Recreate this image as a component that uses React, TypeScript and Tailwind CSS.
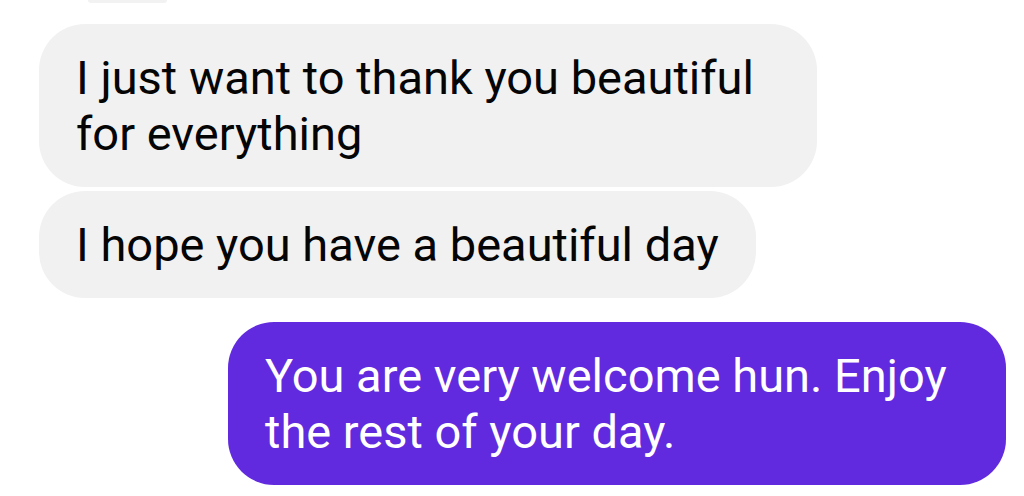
import React from "react";

/* ---------------- TYPES ---------------- */
interface Message {
  id: number;
  text: string;
  mine: boolean;
}

const MESSAGES: Message[] = [
  { id: 1, text: "I just want to thank you beautiful for everything", mine: false },
  { id: 2, text: "I hope you have a beautiful day", mine: false },
  { id: 3, text: "You are very welcome hun. Enjoy the rest of your day.", mine: true },
];

/* ---------------- COMPONENT ---------------- */
const App: React.FC = () => {
  return (
    <div
      className="w-[1024px] h-[496px] bg-white overflow-hidden flex flex-col"
      style={{ fontFamily: "Roboto, 'Noto Sans', sans-serif" }}
    >
      {/* tail of the previous bubble, cut off at the top */}
      <div className="ml-[88px] w-[79px] h-[3px] bg-[#f2f2f2] rounded-b-md" />

      <div className="flex flex-col mt-[21px]">
        {MESSAGES.map((m, i) => {
          const prevMine = i > 0 ? MESSAGES[i - 1].mine : m.mine;
          const gap = i === 0 ? "" : prevMine === m.mine ? "mt-[4px]" : "mt-[24px]";
          return (
            <div
              key={m.id}
              className={`max-w-[778px] px-[37px] pt-[26px] pb-[25px] rounded-[46px] text-[47px] leading-[56px] ${gap} ${
                m.mine
                  ? "self-end mr-[18px] bg-[#612ade] text-white"
                  : "self-start ml-[39px] bg-[#f1f1f1] text-[#050505]"
              }`}
            >
              {m.text}
            </div>
          );
        })}
      </div>
    </div>
  );
};

export default App;
